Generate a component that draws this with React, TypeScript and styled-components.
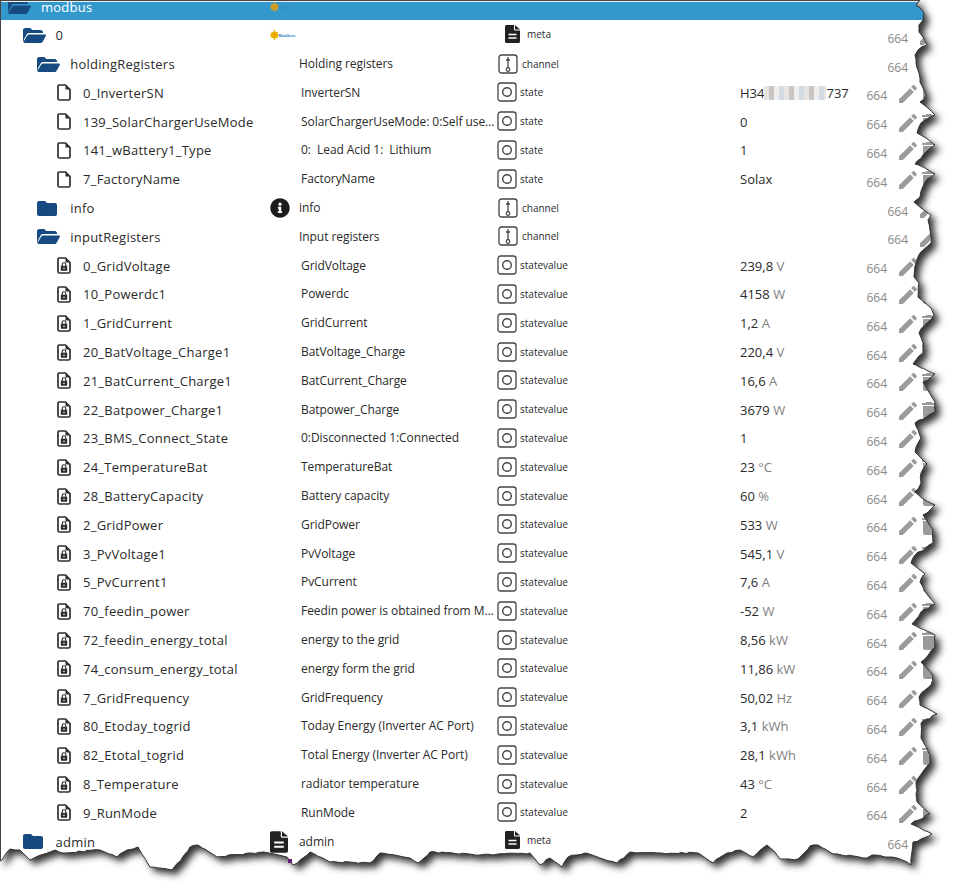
import styled, { createGlobalStyle } from "styled-components";
import { FaInfoCircle } from "react-icons/fa";

type Kind = "meta" | "channel" | "state" | "statevalue";
type Icon = "open" | "closed" | "file" | "lock";

type RowData = {
  name: string;
  icon: Icon;
  depth: number;
  desc?: string;
  kind?: Kind;
  value?: string;
  unit?: string;
  logo?: boolean;
  info?: boolean;
  metaLogo?: boolean;
  selected?: boolean;
};

const lockRow = (name: string, desc: string, value: string, unit?: string): RowData => ({
  name,
  desc,
  value,
  unit,
  icon: "lock",
  depth: 3,
  kind: "statevalue",
});

const fileRow = (name: string, desc: string, value: string): RowData => ({
  name,
  desc,
  value,
  icon: "file",
  depth: 3,
  kind: "state",
});

const rows: RowData[] = [
  { name: "modbus", icon: "open", depth: 0, logo: true, selected: true },
  { name: "0", icon: "open", depth: 1, logo: true, kind: "meta" },
  { name: "holdingRegisters", icon: "open", depth: 2, desc: "Holding registers", kind: "channel" },
  fileRow("0_InverterSN", "InverterSN", "H34"),
  fileRow("139_SolarChargerUseMode", "SolarChargerUseMode: 0:Self use mode 1:Force time use", "0"),
  fileRow("141_wBattery1_Type", "0:  Lead Acid 1:  Lithium", "1"),
  fileRow("7_FactoryName", "FactoryName", "Solax"),
  { name: "info", icon: "closed", depth: 2, desc: "info", info: true, kind: "channel" },
  { name: "inputRegisters", icon: "open", depth: 2, desc: "Input registers", kind: "channel" },
  lockRow("0_GridVoltage", "GridVoltage", "239,8", "V"),
  lockRow("10_Powerdc1", "Powerdc", "4158", "W"),
  lockRow("1_GridCurrent", "GridCurrent", "1,2", "A"),
  lockRow("20_BatVoltage_Charge1", "BatVoltage_Charge", "220,4", "V"),
  lockRow("21_BatCurrent_Charge1", "BatCurrent_Charge", "16,6", "A"),
  lockRow("22_Batpower_Charge1", "Batpower_Charge", "3679", "W"),
  lockRow("23_BMS_Connect_State", "0:Disconnected 1:Connected", "1"),
  lockRow("24_TemperatureBat", "TemperatureBat", "23", "°C"),
  lockRow("28_BatteryCapacity", "Battery capacity", "60", "%"),
  lockRow("2_GridPower", "GridPower", "533", "W"),
  lockRow("3_PvVoltage1", "PvVoltage", "545,1", "V"),
  lockRow("5_PvCurrent1", "PvCurrent", "7,6", "A"),
  lockRow("70_feedin_power", "Feedin power is obtained from Meter or CT", "-52", "W"),
  lockRow("72_feedin_energy_total", "energy to the grid", "8,56", "kW"),
  lockRow("74_consum_energy_total", "energy form the grid", "11,86", "kW"),
  lockRow("7_GridFrequency", "GridFrequency", "50,02", "Hz"),
  lockRow("80_Etoday_togrid", "Today Energy (Inverter AC Port)", "3,1", "kWh"),
  lockRow("82_Etotal_togrid", "Total Energy (Inverter AC Port)", "28,1", "kWh"),
  lockRow("8_Temperature", "radiator temperature", "43", "°C"),
  lockRow("9_RunMode", "RunMode", "2"),
  { name: "admin", icon: "closed", depth: 1, desc: "admin", metaLogo: true, kind: "meta" },
];

// torn paper edge, traced from the right side down and then along the bottom to the left
const tracedEdge =
  "920,0 916,5 920,8 924,13 923,20 919,25 919,32 923,37 927,45 918,50 915,55 916,63 919,73 920,82 926,95 920,102 928,108 935,115 921,123 917,133 926,138 935,145 923,155 915,164 923,167 935,174 925,182 920,197 914,202 921,208 931,215 928,220 930,230 931,243 920,253 916,263 914,277 919,283 918,297 931,308 934,315 919,333 923,343 923,353 913,364 935,374 923,382 935,402 935,412 915,423 921,438 915,452 927,464 921,473 921,483 915,492 923,499 935,505 923,515 933,530 933,543 915,555 911,563 925,574 920,582 926,593 935,604 921,612 912,624 935,635 935,647 925,659 921,662 933,675 931,685 919,697 920,705 937,714 921,723 921,738 930,755 930,763 916,782 917,802 930,814 911,824 932,834 913,842 911,865 " +
  "907,862 897,858 872,855 867,858 833,854 818,845 810,846 798,859 780,859 775,852 767,845 753,857 740,850 727,853 713,863 698,853 637,853 630,852 617,863 603,859 585,853 568,857 562,867 550,858 540,865 530,853 480,855 430,852 418,863 410,858 380,853 370,863 330,862 310,852 293,865 287,857 263,852 217,857 198,845 190,847 172,870 150,867 138,847 127,850 117,857 100,850 63,853 55,850 30,860 20,850 10,849 2,860 0,861";

// breaks the long straight pieces into small steps so the edge looks ragged
const roughen = (edge: string) => {
  const pts = edge.split(" ").map((p) => p.split(",").map(Number));
  const out: string[] = [];
  let seed = 7;
  pts.forEach(([x, y], i) => {
    out.push(`${x},${y}`);
    const next = pts[i + 1];
    if (!next) return;
    const steps = Math.floor(Math.hypot(next[0] - x, next[1] - y) / 4);
    for (let s = 1; s < steps; s++) {
      seed = (seed * 31 + 11) % 101;
      const wobble = (seed / 101 - 0.5) * 1.6;
      out.push(`${(x + ((next[0] - x) * s) / steps + wobble).toFixed(1)},${(y + ((next[1] - y) * s) / steps + wobble).toFixed(1)}`);
    }
  });
  return out.join(" ");
};

const tear = roughen(tracedEdge);

const FolderIcon = ({ open }: { open: boolean }) =>
  open ? (
    <svg width="23" height="15" viewBox="0 0 23 15" fill="#174a80">
      <path d="M0 13.5V2.2C0 1 1 0 2.2 0h5l2.2 2h8.4C19 2 20 3 20 4.2V5H6.2C5 5 4.2 5.5 3.6 6.500L.8 11.500V13.500z" />
      <path d="M6.500 6.500H22c.8 0 1.200.7.8 1.400l-3.200 5.800c-.4.800-1.200 1.300-2.200 1.300H1.500c-.8 0-1.200-.7-.8-1.400l3.400-5.800c.5-1 1.400-1.300 2.400-1.300z" />
    </svg>
  ) : (
    <svg width="20" height="15" viewBox="0 0 20 15" fill="#174a80">
      <path d="M0 2a2 2 0 0 1 2-2h6l2 2h8a2 2 0 0 1 2 2v9a2 2 0 0 1-2 2H2a2 2 0 0 1-2-2z" />
    </svg>
  );

const FileIcon = ({ lock }: { lock: boolean }) => (
  <svg width="14" height="17" viewBox="0 0 14 17">
    <path
      d="M2 1h6.500L13 5.500V14.500c0 .8-.7 1.500-1.500 1.500h-9C1.700 16 1 15.300 1 14.500V2c0-.6.4-1 1-1z"
      fill="none"
      stroke="#2e2e2e"
      strokeWidth="1.700"
    />
    <path d="M8.500 1v4.500H13z" fill="#2e2e2e" />
    {lock && (
      <g>
        <rect x="3.800" y="8.800" width="6.400" height="5" rx=".6" fill="#2e2e2e" />
        <path d="M5.200 9V7.500a1.800 1.800 0 0 1 3.600 0V9" fill="none" stroke="#2e2e2e" strokeWidth="1.100" />
        <circle cx="7" cy="11.300" r=".8" fill="#fff" />
      </g>
    )}
  </svg>
);

const DocIcon = ({ width, height }: { width: number; height: number }) => (
  <svg width={width} height={height} viewBox="0 0 15 18">
    <path d="M1.500 0H9v4.500c0 .6.500 1 1 1h5v11c0 .8-.7 1.500-1.500 1.500h-12C.7 18 0 17.300 0 16.500v-15C0 .7.700 0 1.500 0z" fill="#222" />
    <path d="M10 0l5 4.500h-5z" fill="#222" />
    <path d="M3.500 9.500h8M3.500 13h8" stroke="#fff" strokeWidth="1.700" />
  </svg>
);

const ChannelIcon = () => (
  <svg width="20" height="20" viewBox="0 0 20 20" fill="none" stroke="#444">
    <rect x="1" y="1" width="18" height="18" rx="2.500" strokeWidth="1.300" />
    <path d="M10 3v11.500M8 6h4" strokeWidth="1.300" />
    <circle cx="10" cy="15.500" r="1.800" strokeWidth="1.200" fill="#fff" />
  </svg>
);

const StateIcon = () => (
  <svg width="20" height="20" viewBox="0 0 20 20" fill="none" stroke="#444">
    <rect x="1" y="1" width="18" height="18" rx="2.500" strokeWidth="1.300" />
    <circle cx="10" cy="10" r="4.300" strokeWidth="1.400" />
  </svg>
);

const PencilIcon = () => (
  <svg width="24" height="24" viewBox="0 0 24 24" fill="#9b9b9b">
    <path d="M3 17.250V21h3.750L17.810 9.940l-3.750-3.750L3 17.250zM20.710 7.040c.39-.39.39-1.020 0-1.410l-2.340-2.340c-.39-.39-1.020-.39-1.410 0l-1.830 1.830 3.750 3.750 1.830-1.830z" />
  </svg>
);

const TrashIcon = () => (
  <svg width="24" height="24" viewBox="0 0 24 24" fill="#9b9b9b">
    <path d="M6 19c0 1.100.9 2 2 2h8c1.100 0 2-.9 2-2V7H6v12zM19 4h-3.500l-1-1h-5l-1 1H5v2h14V4z" />
  </svg>
);

const ModbusLogo = ({ dim }: { dim?: boolean }) => (
  <svg width="26" height="10" viewBox="0 0 26 10">
    <circle cx="4.500" cy="5" r="3.600" fill={dim ? "#d8a828" : "#f0b400"} />
    <path d="M4.500 0v10M0 5h9M1.300 1.800l6.400 6.400M7.700 1.800L1.300 8.200" stroke={dim ? "#c89a20" : "#e8a800"} strokeWidth="1" />
    <text x="8.500" y="6.800" fontSize="4.400" fontWeight="700" fontFamily="Liberation Sans, sans-serif" fill={dim ? "#2d8fc4" : "#2a86c8"}>
      Modbus
    </text>
  </svg>
);

const TypeIcon = ({ kind }: { kind: Kind }) => {
  if (kind === "meta") return <DocIcon width={15} height={18} />;
  if (kind === "channel") return <ChannelIcon />;
  return <StateIcon />;
};

const Row = ({ row }: { row: RowData }) => {
  const leaf = row.icon === "file" || row.icon === "lock";
  return (
    <RowWrapper $selected={row.selected}>
      <NameCell $indent={leaf ? 57 : 8 + row.depth * 14.6}>
        <NameIcon $leaf={leaf}>
          {leaf ? <FileIcon lock={row.icon === "lock"} /> : <FolderIcon open={row.icon === "open"} />}
        </NameIcon>
        {row.name}
      </NameCell>
      <GlyphCell>
        {row.logo && <ModbusLogo dim={row.selected} />}
        {row.info && <FaInfoCircle size={20} color="#1c1c1c" />}
        {row.metaLogo && <DocIcon width={18} height={22} />}
      </GlyphCell>
      <DescCell $leaf={leaf}>{row.desc}</DescCell>
      <TypeCell $kind={row.kind}>
        {row.kind && <TypeIcon kind={row.kind} />}
        {row.kind}
      </TypeCell>
      <ValueCell>
        {row.value}
        {row.name === "0_InverterSN" && (
          <>
            <Blurred />
            737
          </>
        )}
        {row.unit && <Unit> {row.unit}</Unit>}
      </ValueCell>
      {!row.selected && (
        <ActionsCell>
          <Mode>664</Mode>
          <PencilIcon />
          {leaf && <TrashIcon />}
        </ActionsCell>
      )}
    </RowWrapper>
  );
};

export default function App() {
  return (
    <Page>
      <GlobalStyle />
      <Tree>
        {rows.map((row) => (
          <Row key={row.name + row.depth} row={row} />
        ))}
      </Tree>
      <TornEdge viewBox="0 0 958 890">
        <defs>
          <clipPath id="outside">
            <polygon points={`${tear} 0,890 958,890 958,0`} />
          </clipPath>
          <filter id="soft" x="-5%" y="-5%" width="110%" height="110%">
            <feGaussianBlur stdDeviation="3.500" />
          </filter>
        </defs>
        <polygon points={`${tear} 0,890 958,890 958,0`} fill="#fff" />
        <g clipPath="url(#outside)">
          <polygon points={`${tear} 0,0`} fill="#333" filter="url(#soft)" transform="translate(5 5)" />
        </g>
        <polyline points={tear} fill="none" stroke="#333" strokeWidth="1" />
        <path d="M1 1.500H918" fill="none" stroke="#f2f2f2" strokeWidth="1" />
        <path d="M0 .5H920M.5 0V861" fill="none" stroke="#444" strokeWidth="1" />
        <rect x="288" y="859" width="4" height="4" fill="#6a1b7a" />
      </TornEdge>
    </Page>
  );
}

const GlobalStyle = createGlobalStyle`
  html, body {
    margin: 0;
    background: #fff;
    overflow: hidden;
  }
`;

const Page = styled.div`
  position: relative;
  width: 958px;
  height: 890px;
  overflow: hidden;
  font-family: "Open Sans", "Noto Sans", sans-serif;
  color: #2a2a2a;
`;

const Tree = styled.div`
  width: 941px;
  margin-top: -7.9px;
`;

const RowWrapper = styled.div<{ $selected?: boolean }>`
  display: grid;
  grid-template-columns: 269px 30px 198px 243px 1fr auto;
  align-items: center;
  height: 28.8px;
  background: ${(p) => (p.$selected ? "linear-gradient(#3399cc 27.9px, transparent 0)" : "transparent")};
  color: ${(p) => (p.$selected ? "#fff" : "inherit")};
`;

const NameCell = styled.div<{ $indent: number }>`
  display: flex;
  align-items: center;
  padding-left: ${(p) => p.$indent}px;
  font-size: 13px;
  letter-spacing: 0.25px;
  white-space: nowrap;
`;

const NameIcon = styled.span<{ $leaf: boolean }>`
  display: flex;
  flex: none;
  width: ${(p) => (p.$leaf ? 26 : 33)}px;
`;

const GlyphCell = styled.div`
  display: flex;
  align-items: center;
  margin-left: 1px;
`;

const DescCell = styled.div<{ $leaf: boolean }>`
  padding: 0 0 1px ${(p) => (p.$leaf ? 2 : 0)}px;
  font-size: 12px;
  letter-spacing: -0.06px;
  white-space: pre;
  overflow: hidden;
  text-overflow: ellipsis;
`;

const TypeCell = styled.div<{ $kind?: Kind }>`
  display: flex;
  align-items: center;
  gap: ${(p) => (p.$kind === "meta" ? 7 : p.$kind === "channel" ? 4 : 3)}px;
  padding-left: ${(p) => (p.$kind === "meta" ? 8 : p.$kind === "channel" ? 1 : 0)}px;
  padding-bottom: ${(p) => (p.$kind === "meta" ? 3 : 1)}px;
  font-size: 10px;
`;

const ValueCell = styled.div`
  display: flex;
  align-items: center;
  font-size: 13px;
  white-space: pre;
`;

const Unit = styled.span`
  color: #808080;
`;

const Blurred = styled.span`
  width: 62px;
  height: 14px;
  background: repeating-linear-gradient(90deg, #e8e4e2 0 5px, #c9c5c2 5px 10px, #f0eeee 10px 15px, #d3dce2 15px 20px);
`;

const ActionsCell = styled.div`
  display: flex;
  align-items: center;
  justify-content: flex-end;
  grid-column: 6;

  svg {
    margin-top: 2px;
  }

  svg + svg {
    margin-left: -3px;
  }
`;

const Mode = styled.span`
  margin: 6px 9px 0 0;
  font-size: 12px;
  color: #888;
`;

const TornEdge = styled.svg`
  position: absolute;
  top: 0;
  left: 0;
  width: 958px;
  height: 890px;
`;
